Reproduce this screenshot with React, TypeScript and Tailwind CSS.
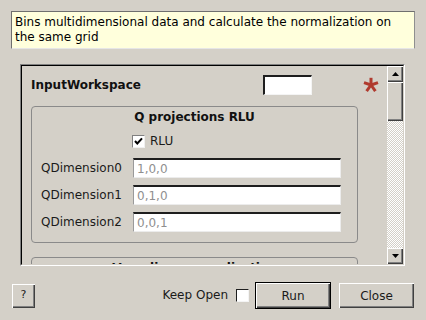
import React from "react";

const bevel =
  "shadow-[inset_1px_1px_0_#ffffff,inset_-1px_-1px_0_#404040,inset_-2px_-2px_0_#808080]";

function Field({ ph }: { ph: string }) {
  return (
    <div className="w-[208px] h-[20px] bg-white border-t-2 border-t-[#1e1e1e] border-l border-l-[#9a9a9a] border-r border-r-[#ececec] border-b border-b-[#ececec] flex items-center pl-[3px] text-[12px] text-[#8f8f8f] leading-none">
      {ph}
    </div>
  );
}

function Row({ label, ph }: { label: string; ph: string }) {
  return (
    <div className="flex items-center h-[20px] mt-[7px]">
      <div className="w-[92px] text-[12px] text-[#1a1a1a] leading-[15px] whitespace-nowrap">{label}</div>
      <Field ph={ph} />
    </div>
  );
}

function Arrow({ up }: { up: boolean }) {
  return (
    <div className={`w-[16px] h-[16px] bg-[#d4d0c8] ${bevel} flex items-center justify-center`}>
      <svg width="7" height="4" viewBox="0 0 7 4">
        {up ? <polygon points="3.5,0 7,4 0,4" fill="#000" /> : <polygon points="0,0 7,0 3.5,4" fill="#000" />}
      </svg>
    </div>
  );
}

export default function App() {
  return (
    <div
      className="w-[426px] h-[320px] bg-[#d4d0c8] flex flex-col pt-[11px] overflow-hidden"
      style={{ fontFamily: '"DejaVu Sans", sans-serif' }}
    >
      {/* description tooltip */}
      <div className="ml-[11px] w-[404px] h-[38px] bg-[#ffffdc] border border-t-[#6f6f6f] border-l-[#6f6f6f] border-r-[#8f8f8f] border-b-[#e6e6e6] pt-[3px] pl-[3px] text-[12px] leading-[15px] text-black">
        <div className="whitespace-nowrap">Bins multidimensional data and calculate the normalization on</div>
        <div className="whitespace-nowrap">the same grid</div>
      </div>

      {/* scroll area */}
      <div className="mt-[15px] ml-[20px] w-[385px] h-[202px] border border-t-[#808080] border-l-[#808080] border-r-white border-b-white">
        <div className="w-full h-full border border-t-black border-l-black border-r-[#d4d0c8] border-b-[#d4d0c8] flex">
          <div className="flex-1 overflow-hidden flex flex-col pt-[9px] pl-[9px]">
            {/* InputWorkspace row */}
            <div className="flex items-center h-[20px] shrink-0">
              <div className="w-[232px] text-[12px] font-bold leading-[15px] text-[#111]">InputWorkspace</div>
              <div className="w-[49px] h-[20px] bg-white border-t-2 border-l-2 border-t-[#1e1e1e] border-l-[#1e1e1e] border-r border-b border-r-[#f4f4f4] border-b-[#f4f4f4]" />
              <svg className="ml-[51px]" width="16" height="16" viewBox="0 0 16 16">
                <g stroke="#b03a2e" strokeWidth="3">
                  <line x1="8" y1="8" x2="8" y2="0.8" />
                  <line x1="8" y1="8" x2="15" y2="5.6" />
                  <line x1="8" y1="8" x2="12.4" y2="14.2" />
                  <line x1="8" y1="8" x2="3.6" y2="14.2" />
                  <line x1="8" y1="8" x2="1" y2="5.6" />
                </g>
              </svg>
            </div>

            {/* Q projections group */}
            <div className="mt-[11px] w-[327px] shrink-0 border border-[#8a8a8a] rounded-[4px] pt-[3px] pl-[9px] pb-[10px] flex flex-col">
              <div className="text-[12px] font-bold leading-[15px] text-[#111] text-center pr-[9px]">Q projections RLU</div>
              <div className="flex items-center h-[20px] mt-[6px]">
                <div className="w-[91px]" />
                <div className="w-[13px] h-[13px] bg-white border border-t-[#808080] border-l-[#808080] border-r-[#f0f0f0] border-b-[#f0f0f0] flex items-center justify-center">
                  <svg width="9" height="9" viewBox="0 0 9 9">
                    <polyline points="1,4 3.3,6.5 8,1.3" fill="none" stroke="#000" strokeWidth="2" />
                  </svg>
                </div>
                <div className="ml-[5px] text-[12px] leading-[15px] text-[#1a1a1a]">RLU</div>
              </div>
              <Row label="QDimension0" ph="1,0,0" />
              <Row label="QDimension1" ph="0,1,0" />
              <Row label="QDimension2" ph="0,0,1" />
            </div>

            {/* Vanadium group (clipped) */}
            <div className="mt-[14px] w-[327px] h-[60px] shrink-0 border border-[#8a8a8a] rounded-[4px] pt-[3px]">
              <div className="text-[12px] font-bold leading-[15px] text-[#111] text-center whitespace-nowrap">Vanadium normalization</div>
            </div>
          </div>

          {/* scrollbar */}
          <div className="w-[16px] h-full flex flex-col">
            <Arrow up={true} />
            <div className={`h-[39px] bg-[#d4d0c8] ${bevel}`} />
            <div className="flex-1 bg-[image:repeating-conic-gradient(#d4d0c8_0%_25%,#ffffff_0%_50%)] bg-[length:2px_2px]" />
            <Arrow up={false} />
          </div>
        </div>
      </div>

      {/* bottom buttons */}
      <div className="mt-[16px] h-[27px] flex items-center pl-[12px] pr-[12px] text-[12px] text-[#1a1a1a]">
        <div className={`w-[23px] h-[24px] bg-[#d4d0c8] ${bevel} flex items-center justify-center text-[11px]`}>?</div>
        <div className="flex-1" />
        <div className="leading-[15px]">Keep Open</div>
        <div className="ml-[8px] w-[13px] h-[13px] bg-white border border-t-[#1e1e1e] border-l-[#1e1e1e] border-r-[#f4f4f4] border-b-[#f4f4f4]" />
        <div className="ml-[6px] w-[76px] h-[27px] border border-black">
          <div className={`w-full h-full bg-[#d4d0c8] ${bevel} flex items-center justify-center`}>Run</div>
        </div>
        <div className={`ml-[8px] w-[75px] h-[25px] bg-[#d4d0c8] ${bevel} flex items-center justify-center`}>Close</div>
      </div>
    </div>
  );
}
